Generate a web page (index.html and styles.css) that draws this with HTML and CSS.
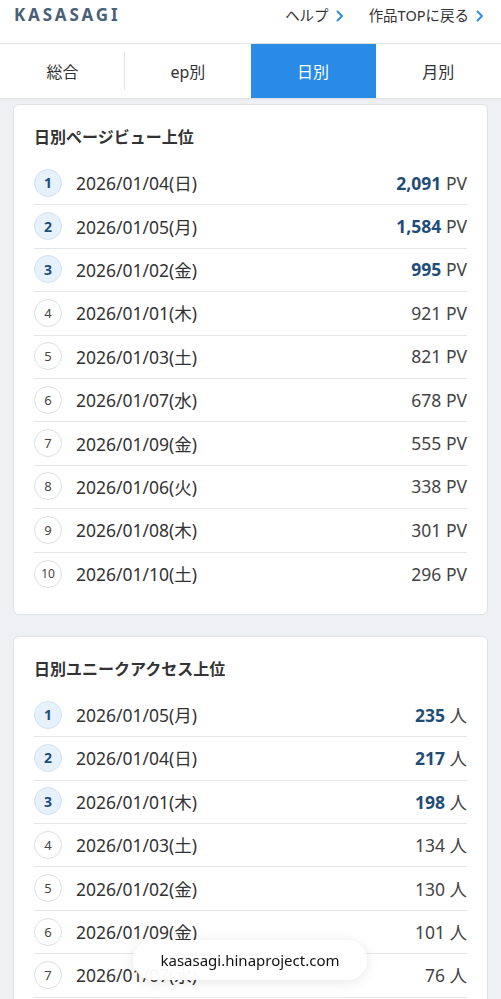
FILE: index.html
```html
<!DOCTYPE html>
<html lang="ja">
<head>
    <meta charset="UTF-8">
    <meta name="viewport" content="width=device-width, initial-scale=1.0">
    <title>KASASAGI</title>
    <link rel="stylesheet" href="styles.css">
</head>
<body>
    <header class="site-header">
        <div class="logo">KASASAGI</div>
        <nav class="header-links">
            <a href="#" class="header-link">ヘルプ<svg class="chev" width="8" height="12" viewBox="0 0 8 12"><path d="M1.5 1.5 L6 6 L1.5 10.5" fill="none" stroke="#2a8be6" stroke-width="1.8" stroke-linecap="round" stroke-linejoin="round"/></svg></a>
            <a href="#" class="header-link">作品TOPに戻る<svg class="chev" width="8" height="12" viewBox="0 0 8 12"><path d="M1.5 1.5 L6 6 L1.5 10.5" fill="none" stroke="#2a8be6" stroke-width="1.8" stroke-linecap="round" stroke-linejoin="round"/></svg></a>
        </nav>
    </header>

    <div class="tabs">
        <a href="#" class="tab tab-first">総合</a>
        <a href="#" class="tab">ep別</a>
        <a href="#" class="tab active">日別</a>
        <a href="#" class="tab">月別</a>
    </div>

    <main class="content">
        <section class="card">
            <h2 class="card-title">日別ページビュー上位</h2>
            <ul class="rank-list">
                <li class="rank-row top"><span class="badge">1</span><span class="date">2026/01/04(日)</span><span class="value"><b>2,091</b> PV</span></li>
                <li class="rank-row top"><span class="badge">2</span><span class="date">2026/01/05(月)</span><span class="value"><b>1,584</b> PV</span></li>
                <li class="rank-row top"><span class="badge">3</span><span class="date">2026/01/02(金)</span><span class="value"><b>995</b> PV</span></li>
                <li class="rank-row"><span class="badge">4</span><span class="date">2026/01/01(木)</span><span class="value">921 PV</span></li>
                <li class="rank-row"><span class="badge">5</span><span class="date">2026/01/03(土)</span><span class="value">821 PV</span></li>
                <li class="rank-row"><span class="badge">6</span><span class="date">2026/01/07(水)</span><span class="value">678 PV</span></li>
                <li class="rank-row"><span class="badge">7</span><span class="date">2026/01/09(金)</span><span class="value">555 PV</span></li>
                <li class="rank-row"><span class="badge">8</span><span class="date">2026/01/06(火)</span><span class="value">338 PV</span></li>
                <li class="rank-row"><span class="badge">9</span><span class="date">2026/01/08(木)</span><span class="value">301 PV</span></li>
                <li class="rank-row"><span class="badge small">10</span><span class="date">2026/01/10(土)</span><span class="value">296 PV</span></li>
            </ul>
        </section>

        <section class="card card-open">
            <h2 class="card-title">日別ユニークアクセス上位</h2>
            <ul class="rank-list">
                <li class="rank-row top"><span class="badge">1</span><span class="date">2026/01/05(月)</span><span class="value"><b>235</b> 人</span></li>
                <li class="rank-row top"><span class="badge">2</span><span class="date">2026/01/04(日)</span><span class="value"><b>217</b> 人</span></li>
                <li class="rank-row top"><span class="badge">3</span><span class="date">2026/01/01(木)</span><span class="value"><b>198</b> 人</span></li>
                <li class="rank-row"><span class="badge">4</span><span class="date">2026/01/03(土)</span><span class="value">134 人</span></li>
                <li class="rank-row"><span class="badge">5</span><span class="date">2026/01/02(金)</span><span class="value">130 人</span></li>
                <li class="rank-row"><span class="badge">6</span><span class="date">2026/01/09(金)</span><span class="value">101 人</span></li>
                <li class="rank-row"><span class="badge">7</span><span class="date">2026/01/07(水)</span><span class="value">76 人</span></li>
            </ul>
        </section>
    </main>

    <div class="url-pill">kasasagi.hinaproject.com</div>
</body>
</html>
```

FILE: styles.css
```css
:root {
    --bg-page: #eef0f3;
    --text-main: #333;
    --text-sub: #444;
    --border: #e2e5e9;
    --accent: #2a8be6;
    --navy: #1f4d78;
    --logo: #4a5f78;
}

* {
    box-sizing: border-box;
}

body {
    font-family: "Noto Sans", "Noto Sans CJK JP", sans-serif;
    background-color: var(--bg-page);
    color: var(--text-main);
    margin: 0;
    padding: 0;
}

a {
    color: inherit;
    text-decoration: none;
}

.site-header {
    height: 44px;
    background: #fff;
    border-bottom: 1px solid var(--border);
    display: flex;
    justify-content: space-between;
    align-items: flex-start;
    padding: 3px 17px 0 14px;
}

.logo {
    font-size: 17px;
    font-weight: 700;
    letter-spacing: 2.8px;
    line-height: 24px;
    color: var(--logo);
}

.header-links {
    display: flex;
    gap: 25px;
    font-size: 14.5px;
    line-height: 24px;
    color: #333;
}

.header-link {
    display: flex;
    align-items: center;
}

.chev {
    margin-left: 7px;
    margin-top: 1px;
}

.tabs {
    display: grid;
    grid-template-columns: repeat(4, 1fr);
    height: 54px;
    background: #fff;
    box-shadow: 0 1px 2px rgba(0, 0, 0, 0.08);
}

.tab {
    display: flex;
    align-items: center;
    justify-content: center;
    font-size: 16px;
    color: #333;
}

.tab-first {
    position: relative;
}

.tab-first::after {
    content: "";
    position: absolute;
    right: 0;
    top: 8px;
    bottom: 8px;
    width: 1px;
    background: var(--border);
}

.tab.active {
    background: var(--accent);
    color: #fff;
}

.content {
    padding: 6px 13px 60px;
    display: flex;
    flex-direction: column;
    gap: 21px;
}

.card {
    background: #fff;
    border: 1px solid #dfe2e6;
    border-radius: 6px;
    padding: 20px 20px 18px;
}

.card-title {
    margin: 0 0 13px;
    font-size: 16px;
    font-weight: 700;
    line-height: 24px;
    color: #333;
}

.rank-list {
    list-style: none;
    margin: 0;
    padding: 0;
}

.rank-row {
    display: flex;
    align-items: center;
    height: 43.4px;
    border-bottom: 1px solid var(--border);
    padding-bottom: 1px;
}

.rank-row:last-child {
    border-bottom: none;
}

.card-open .rank-row:last-child {
    border-bottom: 1px solid var(--border);
}

.badge {
    width: 28px;
    height: 28px;
    flex-shrink: 0;
    border-radius: 50%;
    border: 1px solid #dcdfe3;
    display: flex;
    align-items: center;
    justify-content: center;
    font-size: 13px;
    color: var(--text-sub);
    background: #fff;
}

.badge.small {
    font-size: 12px;
}

.rank-row.top .badge {
    background: #e7f1fb;
    border-color: #d2e2f2;
    color: var(--navy);
    font-weight: 700;
    font-size: 14px;
}

.date {
    margin-left: 14px;
    font-size: 17.5px;
    color: var(--text-main);
}

.value {
    margin-left: auto;
    font-size: 17.5px;
    color: var(--text-sub);
}

.value b {
    color: var(--navy);
    font-weight: 700;
}

.url-pill {
    position: fixed;
    left: 133px;
    bottom: 19px;
    width: 234px;
    height: 40px;
    border-radius: 20px;
    background: rgba(255, 255, 255, 0.96);
    box-shadow: 0 2px 14px rgba(0, 0, 0, 0.1);
    display: flex;
    align-items: center;
    justify-content: center;
    font-size: 15px;
    color: #111;
}
```
